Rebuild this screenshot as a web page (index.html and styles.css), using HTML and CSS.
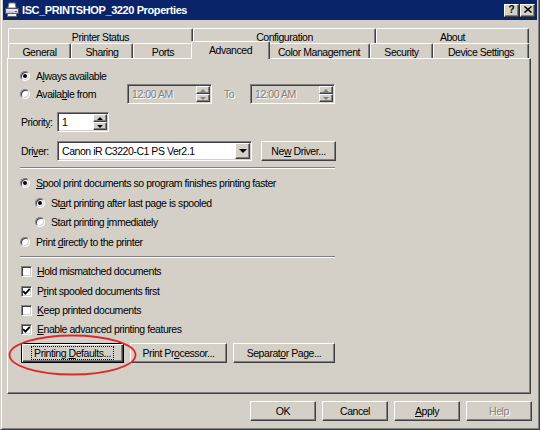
FILE: index.html
```html
<!DOCTYPE html>
<html>
<head>
<meta charset="utf-8">
<title>ISC_PRINTSHOP_3220 Properties</title>
<link rel="stylesheet" href="styles.css">
</head>
<body>
<div class="window">
  <div class="titlebar">
    <svg class="app-icon" width="16" height="16" viewBox="0 0 16 16">
      <polygon points="5,1 11,1 12,6 4,6" fill="#ffffff" stroke="#7a7a7a" stroke-width="1"/>
      <rect x="1.5" y="6.5" width="13" height="5" fill="#c8c8d0" stroke="#505060"/>
      <rect x="2.5" y="7.5" width="11" height="1" fill="#ffffff"/>
      <rect x="3.5" y="11.5" width="9" height="3" fill="#f0f0f0" stroke="#606070"/>
      <rect x="11" y="9" width="2" height="1" fill="#3a6ea5"/>
    </svg>
    <span class="title">ISC_PRINTSHOP_3220 Properties</span>
    <div class="caps">
      <span class="capbtn">?</span>
      <span class="capbtn">
        <svg width="8" height="7" viewBox="0 0 8 7"><path d="M0.5 0.5 L7.5 6.5 M7.5 0.5 L0.5 6.5" stroke="#000" stroke-width="1.5"/></svg>
      </span>
    </div>
  </div>

  <div class="body">
    <div class="tabs">
      <div class="tabrow">
        <div class="tab t-status">Printer Status</div>
        <div class="tab t-config">Configuration</div>
        <div class="tab t-about">About</div>
      </div>
      <div class="tabrow front">
        <div class="tab t-general">General</div>
        <div class="tab t-sharing">Sharing</div>
        <div class="tab t-ports">Ports</div>
        <div class="tab t-adv sel">Advanced</div>
        <div class="tab t-color">Color Management</div>
        <div class="tab t-security">Security</div>
        <div class="tab t-device">Device Settings</div>
      </div>
    </div>

    <div class="panel">
      <div class="row r-always">
        <span class="radio on"></span><span>A<u>l</u>ways available</span>
      </div>
      <div class="row r-from">
        <span class="radio"></span><span class="lbl-from">Availa<u>b</u>le from</span>
        <div class="field time disabled">
          <span class="ftext">12:00 AM</span>
          <div class="spin dis"><span class="sb up"></span><span class="sb down"></span></div>
        </div>
        <span class="to disabled-text">To</span>
        <div class="field time disabled">
          <span class="ftext">12:00 AM</span>
          <div class="spin dis"><span class="sb up"></span><span class="sb down"></span></div>
        </div>
      </div>
      <div class="row r-prio">
        <span class="lbl">Priorit<u>y</u>:</span>
        <div class="field prio">
          <span class="ftext">1</span>
          <div class="spin"><span class="sb up"></span><span class="sb down"></span></div>
        </div>
      </div>
      <div class="row r-driver">
        <span class="lbl">Dri<u>v</u>er:</span>
        <div class="field select">
          <span class="ftext">Canon iR C3220-C1 PS Ver2.1</span>
          <span class="dropbtn"></span>
        </div>
        <span class="btn newdrv"><span>Ne<u>w</u> Driver...</span></span>
      </div>
      <div class="sep"></div>
      <div class="row r-spool">
        <span class="radio on"></span><span><u>S</u>pool print documents so program finishes printing faster</span>
      </div>
      <div class="row r-after sub">
        <span class="radio on"></span><span>St<u>a</u>rt printing after last page is spooled</span>
      </div>
      <div class="row r-immed sub">
        <span class="radio"></span><span>Start printing <u>i</u>mmediately</span>
      </div>
      <div class="row r-direct">
        <span class="radio"></span><span>Print <u>d</u>irectly to the printer</span>
      </div>
      <div class="sep sep2"></div>
      <div class="row c1">
        <span class="check"></span><span><u>H</u>old mismatched documents</span>
      </div>
      <div class="row c2">
        <span class="check on"><svg width="9" height="9" viewBox="0 0 9 9"><path d="M1.2 4.2 L3.4 6.6 L7.8 1.8" fill="none" stroke="#000" stroke-width="1.8"/></svg></span><span>P<u>r</u>int spooled documents first</span>
      </div>
      <div class="row c3">
        <span class="check"></span><span><u>K</u>eep printed documents</span>
      </div>
      <div class="row c4">
        <span class="check on"><svg width="9" height="9" viewBox="0 0 9 9"><path d="M1.2 4.2 L3.4 6.6 L7.8 1.8" fill="none" stroke="#000" stroke-width="1.8"/></svg></span><span><u>E</u>nable advanced printing features</span>
      </div>
      <div class="row btnrow">
        <span class="btn b-defaults focus"><span class="focusrect">Printing <u>D</u>efaults...</span></span>
        <span class="btn b-proc"><span>Print Pr<u>o</u>cessor...</span></span>
        <span class="btn b-sep"><span>Separat<u>o</u>r Page...</span></span>
      </div>
    </div>

    <div class="footer">
      <span class="btn fbtn"><span>OK</span></span>
      <span class="btn fbtn"><span>Cancel</span></span>
      <span class="btn fbtn"><span><u>A</u>pply</span></span>
      <span class="btn fbtn disabled-text"><span>Help</span></span>
    </div>
  </div>

  <svg class="annot" width="129" height="42" viewBox="0 0 129 42">
    <ellipse cx="64.5" cy="21" rx="63" ry="19.5" fill="none" stroke="#dc2a2a" stroke-width="1.8"/>
  </svg>
</div>
</body>
</html>
```

FILE: styles.css
```css
* { box-sizing: border-box; }
html, body { margin: 0; padding: 0; }
body {
  width: 540px;
  height: 430px;
  overflow: hidden;
  background: #d4d0c8;
  font-family: "Liberation Sans", Arial, sans-serif;
  font-size: 10.5px;
  letter-spacing: -0.45px;
  color: #000;
}
u { text-decoration: underline; text-underline-offset: 1px; }

.window {
  position: relative;
  width: 540px;
  height: 430px;
  background: #d4d0c8;
  border: 1px solid;
  border-top: 0;
  border-color: #d4d0c8 #404040 #404040 #d4d0c8;
  box-shadow: inset 1px 0 #ffffff, inset -1px -1px #808080;
  padding: 0 2px 2px 2px;
  display: flex;
  flex-direction: column;
}

/* title bar */
.titlebar {
  height: 20px;
  background: #0a246a;
  display: flex;
  align-items: center;
  padding: 0 2px 0 1px;
}
.app-icon { margin-right: 2px; flex: none; }
.title {
  flex: 1;
  color: #fff;
  font-family: "Liberation Sans", Arial, sans-serif;
  font-weight: bold;
  font-size: 11px;
  letter-spacing: -0.4px;
  white-space: nowrap;
}
.caps { display: flex; gap: 1px; }
.capbtn {
  width: 15px;
  height: 13px;
  background: #d4d0c8;
  border: 1px solid;
  border-color: #ffffff #404040 #404040 #ffffff;
  box-shadow: inset -1px -1px #808080;
  display: flex;
  align-items: center;
  justify-content: center;
  font-family: "Liberation Sans", Arial, sans-serif;
  font-weight: bold;
  font-size: 10px;
  letter-spacing: 0;
  line-height: 1;
  padding-bottom: 1px;
}

/* body */
.body {
  flex: 1;
  display: flex;
  flex-direction: column;
  padding: 8px 6px 0 4px;
}

/* tabs */
.tabs { height: 30px; display: flex; flex-direction: column; }
.tabrow { height: 15px; display: flex; align-items: flex-end; margin-left: 1px; }
.tab {
  height: 15px;
  flex: none;
  display: flex;
  align-items: center;
  justify-content: center;
  white-space: nowrap;
  border-top: 1px solid #ffffff;
  border-left: 1px solid #ffffff;
  border-right: 1px solid #404040;
  box-shadow: inset -1px 0 #808080;
  border-radius: 2px 2px 0 0;
  background: #d4d0c8;
  padding-top: 1px;
}
.tab.sel {
  height: 18px;
  margin: 0 -2px -1px -2px;
  position: relative;
  z-index: 2;
  padding-bottom: 2px;
}
.t-status { width: 185px; }
.t-config { width: 183px; }
.t-about { width: 153px; }
.t-general { width: 63px; }
.t-sharing { width: 62px; }
.t-ports { width: 60px; }
.t-adv { width: 79px; }
.t-color { width: 102px; }
.t-security { width: 63px; }
.t-device { width: 96px; }

/* panel */
.panel {
  height: 336px;
  border: 1px solid;
  border-color: #ffffff #404040 #404040 #ffffff;
  box-shadow: inset -1px -1px #808080;
  padding: 9px 0 0 12px;
  display: flex;
  flex-direction: column;
}
.row { display: flex; align-items: center; height: 16px; white-space: nowrap; }
.r-from { height: 20px; }
.r-prio { height: 20px; margin-top: 8px; }
.r-driver { height: 20px; margin-top: 9px; }
.r-spool { margin-top: 6px; }
.r-after { margin-top: 4px; }
.r-immed { margin-top: 3px; }
.r-direct { margin-top: 4px; }
.sub { padding-left: 15px; }
.c1 { margin-top: 5px; }
.c2 { margin-top: 4px; }
.c3 { margin-top: 3px; }
.c4 { margin-top: 3px; }
.btnrow { height: 20px; margin-top: 6px; padding-left: 1px; }

.sep {
  width: 315px;
  height: 2px;
  margin-top: 6px;
  border-top: 1px solid #808080;
  border-bottom: 1px solid #ffffff;
}

/* radio */
.radio {
  width: 10px;
  height: 10px;
  flex: none;
  border-radius: 50%;
  background: #fff;
  border: 1px solid;
  border-color: #808080 #ffffff #ffffff #808080;
  box-shadow: inset 1px 1px #404040, inset -1px -1px #d4d0c8;
  margin-right: 6px;
  position: relative;
}
.radio.on::after {
  content: "";
  position: absolute;
  left: 2px;
  top: 2px;
  width: 4px;
  height: 4px;
  border-radius: 50%;
  background: #000;
}

/* checkbox */
.check {
  width: 11px;
  height: 11px;
  flex: none;
  background: #fff;
  border: 1px solid;
  border-color: #808080 #ffffff #ffffff #808080;
  box-shadow: inset 1px 1px #404040, inset -1px -1px #d4d0c8;
  margin: 0 5px 0 1px;
  display: flex;
  align-items: center;
  justify-content: center;
}
.check svg { display: block; }

.lbl-from { width: 91px; }
.lbl { width: 37px; padding-left: 1px; }
.disabled-text, .disabled .ftext { color: #808080; text-shadow: 1px 1px #ffffff; }
.to { width: 26px; margin-left: 12px; }

/* fields */
.field {
  height: 20px;
  display: flex;
  align-items: center;
  background: #fff;
  border: 1px solid;
  border-color: #808080 #ffffff #ffffff #808080;
  box-shadow: inset 1px 1px #404040, inset -1px -1px #d4d0c8;
  padding: 1px;
}
.field.disabled { background: #d4d0c8; }
.ftext { flex: 1; padding-left: 3px; white-space: nowrap; overflow: hidden; }
.time { width: 85px; }
.prio { width: 52px; }
.select { width: 195px; }

.spin { width: 14px; height: 16px; display: flex; flex-direction: column; flex: none; }
.sb {
  flex: 1;
  background: #d4d0c8;
  border: 1px solid;
  border-color: #ffffff #404040 #404040 #ffffff;
  box-shadow: inset -1px -1px #808080;
  display: flex;
  align-items: center;
  justify-content: center;
}
.sb::after {
  content: "";
  width: 0;
  height: 0;
  border-left: 3px solid transparent;
  border-right: 3px solid transparent;
}
.sb.up::after { border-bottom: 3px solid #000; }
.sb.down::after { border-top: 3px solid #000; }
.spin.dis .sb.up::after { border-bottom-color: #808080; }
.spin.dis .sb.down::after { border-top-color: #808080; }

.dropbtn {
  width: 15px;
  height: 16px;
  flex: none;
  background: #d4d0c8;
  border: 1px solid;
  border-color: #ffffff #404040 #404040 #ffffff;
  box-shadow: inset -1px -1px #808080;
  display: flex;
  align-items: center;
  justify-content: center;
}
.dropbtn::after {
  content: "";
  width: 0;
  height: 0;
  border-left: 4px solid transparent;
  border-right: 4px solid transparent;
  border-top: 4px solid #000;
}

/* buttons */
.btn {
  height: 20px;
  flex: none;
  display: flex;
  align-items: center;
  justify-content: center;
  background: #d4d0c8;
  border: 1px solid;
  border-color: #ffffff #404040 #404040 #ffffff;
  box-shadow: inset -1px -1px #808080;
  white-space: nowrap;
}
.newdrv { width: 75px; margin-left: 9px; }
.b-defaults { width: 103px; margin-right: 6px; }
.b-proc { width: 97px; margin-right: 6px; }
.b-sep { width: 102px; }
.btn.focus {
  border-color: #000;
  box-shadow: inset 1px 1px #ffffff, inset -1px -1px #404040, inset -2px -2px #808080;
}
.focusrect {
  outline: 1px dotted #000;
  outline-offset: 0;
  padding: 0 2px;
  line-height: 12px;
}

.footer {
  display: flex;
  justify-content: flex-end;
  gap: 6px;
  margin-top: 7px;
  margin-right: -1px;
}
.fbtn { width: 66px; }

/* red annotation drawn over the dialog */
.annot {
  position: absolute;
  left: 7px;
  top: 334px;
  pointer-events: none;
}
```
